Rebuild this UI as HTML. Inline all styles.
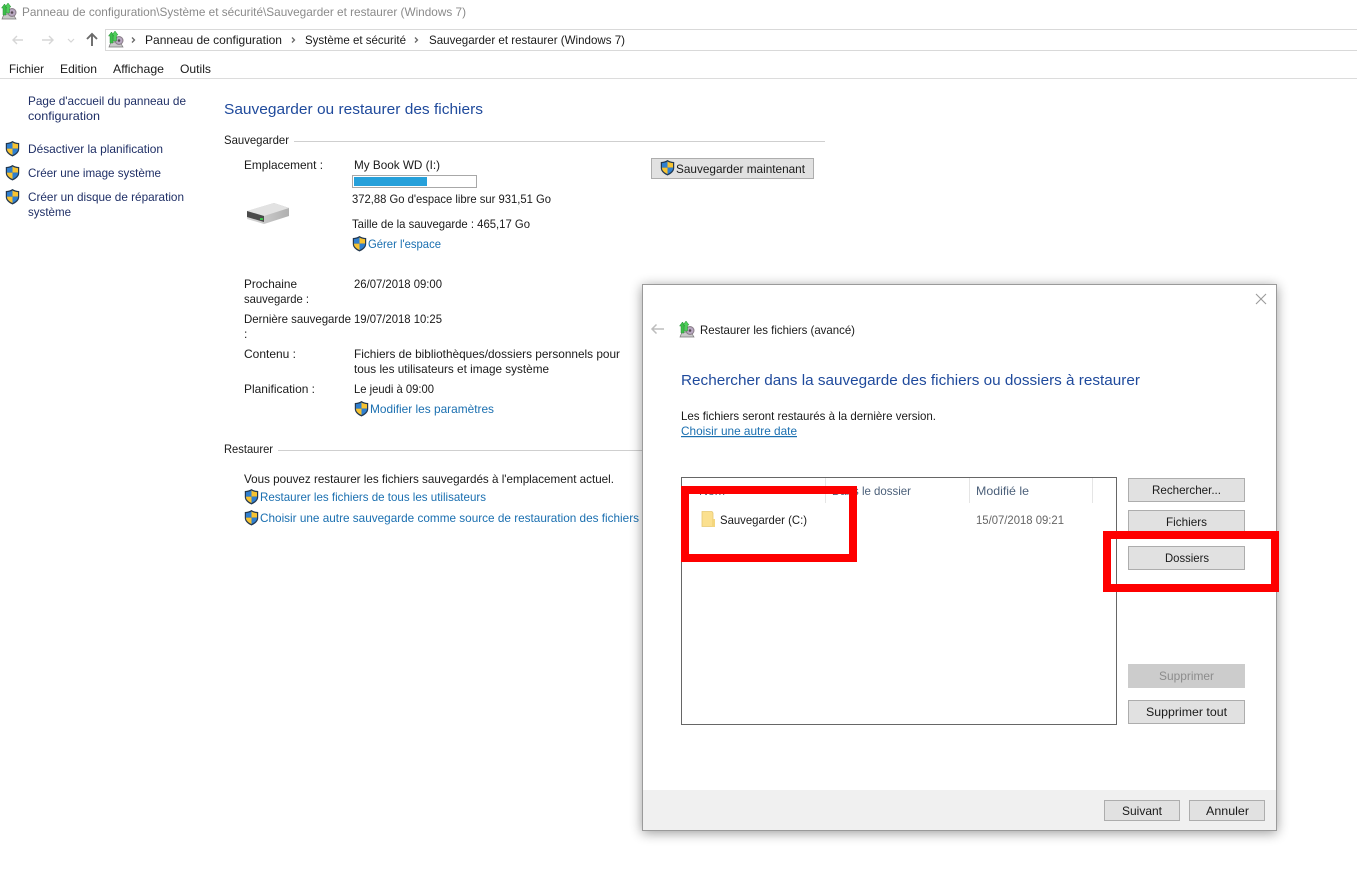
<!DOCTYPE html>
<html lang="fr">
<head>
<meta charset="utf-8">
<title>Sauvegarder et restaurer</title>
<style>
html,body{margin:0;padding:0;background:#fff;width:1357px;height:873px;overflow:hidden}
svg{display:block;position:absolute;left:0;top:0}
text{font-family:"Liberation Sans",sans-serif;font-size:12px;fill:#1a1a1a}
.nav{fill:#1f2f66}
.lnk{fill:#1a6fb0}
.gry{fill:#8a8a8a}
.hd{fill:#4c607a}
.h1{font-size:15px;fill:#1f4a9c}
.btn{fill:#e1e1e1;stroke:#adadad;stroke-width:1}
</style>
</head>
<body>
<svg width="1357" height="873" viewBox="0 0 1357 873" xmlns="http://www.w3.org/2000/svg">
<defs>
  <filter id="sh" x="-8%" y="-8%" width="116%" height="116%">
    <feGaussianBlur stdDeviation="6"/>
  </filter>
  <linearGradient id="dr" x1="0" y1="0" x2="1" y2="0">
    <stop offset="0" stop-color="#d8d8d8"/>
    <stop offset="1" stop-color="#b0b0b0"/>
  </linearGradient>
  <g id="shield">
    <path d="M7.500 0 C5.500 1.400 3 2 .8 2 L.8 8 C.8 11.500 4 14 7.500 15.500 C11 14 14.200 11.500 14.200 8 L14.200 2 C12 2 9.500 1.400 7.500 0Z" fill="#23384f"/>
    <path d="M7.500 1.500 C5.800 2.600 3.800 3 2 3.100 L2 7.600 L7.500 7.600Z" fill="#2f7fd0"/>
    <path d="M7.500 1.500 C9.200 2.600 11.200 3 13 3.100 L13 7.600 L7.500 7.600Z" fill="#f7c331"/>
    <path d="M2 7.600 L7.500 7.600 L7.500 14 C4.500 12.700 2 10.800 2 8Z" fill="#f7c331"/>
    <path d="M13 7.600 L7.500 7.600 L7.500 14 C10.500 12.700 13 10.800 13 8Z" fill="#2f7fd0"/>
  </g>
  <g id="app">
    <path d="M1 16 L3 11 L12 11 L15 16 Z" fill="#c9c9c9" stroke="#777" stroke-width=".7"/>
    <circle cx="11" cy="9.500" r="4.500" fill="#8b7f8a"/>
    <circle cx="11" cy="9.500" r="3.400" fill="#b9a9c2"/>
    <circle cx="11" cy="9.500" r="1.300" fill="#5a4a55"/>
    <path d="M3.500 1 L6.500 5 L5 5 L5 12 L2 12 L2 5 L.5 5Z" fill="#3cc04a" stroke="#2a8c37" stroke-width=".5"/>
    <path d="M7 0 L10 4 L8.500 4 L8.500 10 L5.500 10 L5.500 4 L4 4Z" fill="#4fd05a" stroke="#2a8c37" stroke-width=".5"/>
  </g>
</defs>

<!-- Title bar -->
<use href="#app" x="1" y="3"/>
<text x="22" y="16" textLength="444" lengthAdjust="spacingAndGlyphs" class="gry">Panneau de configuration\Système et sécurité\Sauvegarder et restaurer (Windows 7)</text>

<!-- Nav arrows -->
<path d="M23 40 H13 M17 36 L13 40 L17 44" fill="none" stroke="#d6d6d6" stroke-width="1.400"/>
<path d="M42 40 H53 M49 36 L53 40 L49 44" fill="none" stroke="#d6d6d6" stroke-width="1.400"/>
<path d="M68 39 L71 42 L74 39" fill="none" stroke="#d6d6d6" stroke-width="1.200"/>
<path d="M92 46 V34 M87 39 L92 34 L97 39" fill="none" stroke="#6a6a6a" stroke-width="1.900"/>

<!-- Address bar -->
<rect x="105.500" y="29.500" width="1260" height="21" fill="#fff" stroke="#d9d9d9"/>
<use href="#app" x="108" y="31"/>
<path d="M132 37.500 L134.500 40 L132 42.500" fill="none" stroke="#666" stroke-width="1.300"/>
<text x="145" y="44" textLength="137" lengthAdjust="spacingAndGlyphs">Panneau de configuration</text>
<path d="M292 37.500 L294.500 40 L292 42.500" fill="none" stroke="#666" stroke-width="1.300"/>
<text x="305" y="44" textLength="101" lengthAdjust="spacingAndGlyphs">Système et sécurité</text>
<path d="M415 37.500 L417.500 40 L415 42.500" fill="none" stroke="#666" stroke-width="1.300"/>
<text x="429" y="44" textLength="196" lengthAdjust="spacingAndGlyphs">Sauvegarder et restaurer (Windows 7)</text>

<!-- Menu -->
<text x="9" y="73" textLength="35" lengthAdjust="spacingAndGlyphs">Fichier</text>
<text x="60" y="73" textLength="37" lengthAdjust="spacingAndGlyphs">Edition</text>
<text x="113" y="73" textLength="51" lengthAdjust="spacingAndGlyphs">Affichage</text>
<text x="180" y="73" textLength="31" lengthAdjust="spacingAndGlyphs">Outils</text>
<rect x="0" y="78" width="1357" height="1" fill="#dcdcdc"/>

<!-- Left nav -->
<text x="28" y="105" textLength="158" lengthAdjust="spacingAndGlyphs" class="nav">Page d'accueil du panneau de</text>
<text x="28" y="120" textLength="72" lengthAdjust="spacingAndGlyphs" class="nav">configuration</text>
<use href="#shield" x="5" y="141"/>
<text x="28" y="153" textLength="135" lengthAdjust="spacingAndGlyphs" class="nav">Désactiver la planification</text>
<use href="#shield" x="5" y="165"/>
<text x="28" y="177" textLength="133" lengthAdjust="spacingAndGlyphs" class="nav">Créer une image système</text>
<use href="#shield" x="5" y="189"/>
<text x="28" y="201" textLength="156" lengthAdjust="spacingAndGlyphs" class="nav">Créer un disque de réparation</text>
<text x="28" y="216" textLength="43" lengthAdjust="spacingAndGlyphs" class="nav">système</text>

<!-- Main -->
<text x="224" y="114" textLength="259" lengthAdjust="spacingAndGlyphs" class="h1">Sauvegarder ou restaurer des fichiers</text>
<text x="224" y="144" textLength="65" lengthAdjust="spacingAndGlyphs">Sauvegarder</text>
<rect x="294" y="141" width="531" height="1" fill="#cfcfcf"/>

<text x="244" y="169" textLength="79" lengthAdjust="spacingAndGlyphs">Emplacement :</text>
<text x="354" y="169" textLength="86" lengthAdjust="spacingAndGlyphs">My Book WD (I:)</text>
<rect x="352.500" y="175.500" width="124" height="12" fill="#fff" stroke="#a8a8a8"/>
<rect x="354" y="177" width="73" height="9" fill="#26a0da"/>
<text x="352" y="203" textLength="199" lengthAdjust="spacingAndGlyphs">372,88 Go d'espace libre sur 931,51 Go</text>
<text x="352" y="228" textLength="178" lengthAdjust="spacingAndGlyphs">Taille de la sauvegarde : 465,17 Go</text>
<use href="#shield" x="352" y="236"/>
<text x="368" y="248" textLength="73" lengthAdjust="spacingAndGlyphs" class="lnk">Gérer l'espace</text>

<!-- Drive icon -->
<path d="M247 211 L274 203 L289 208 L289 216 L264 224 L247 219Z" fill="url(#dr)"/>
<path d="M247 211 L274 203 L289 208 L264 216Z" fill="#e2e2e2"/>
<path d="M247 211 L264 216 L264 222 L247 217Z" fill="#4a4a4a"/>
<rect x="260" y="218" width="3" height="2" fill="#3fc24f"/>

<!-- Save button -->
<rect x="651.500" y="158.500" width="162" height="20" class="btn"/>
<use href="#shield" x="660" y="160"/>
<text x="676" y="173" textLength="129" lengthAdjust="spacingAndGlyphs">Sauvegarder maintenant</text>

<text x="244" y="288" textLength="53" lengthAdjust="spacingAndGlyphs">Prochaine</text>
<text x="244" y="303" textLength="65" lengthAdjust="spacingAndGlyphs">sauvegarde :</text>
<text x="354" y="288" textLength="88" lengthAdjust="spacingAndGlyphs">26/07/2018 09:00</text>
<text x="244" y="323" textLength="107" lengthAdjust="spacingAndGlyphs">Dernière sauvegarde</text>
<text x="244" y="338">:</text>
<text x="354" y="323" textLength="88" lengthAdjust="spacingAndGlyphs">19/07/2018 10:25</text>
<text x="244" y="358" textLength="52" lengthAdjust="spacingAndGlyphs">Contenu :</text>
<text x="354" y="358" textLength="266" lengthAdjust="spacingAndGlyphs">Fichiers de bibliothèques/dossiers personnels pour</text>
<text x="354" y="373" textLength="195" lengthAdjust="spacingAndGlyphs">tous les utilisateurs et image système</text>
<text x="244" y="393" textLength="71" lengthAdjust="spacingAndGlyphs">Planification :</text>
<text x="354" y="393" textLength="80" lengthAdjust="spacingAndGlyphs">Le jeudi à 09:00</text>
<use href="#shield" x="354" y="401"/>
<text x="370" y="413" textLength="124" lengthAdjust="spacingAndGlyphs" class="lnk">Modifier les paramètres</text>

<text x="224" y="453" textLength="49" lengthAdjust="spacingAndGlyphs">Restaurer</text>
<rect x="278" y="450" width="364" height="1" fill="#cfcfcf"/>
<text x="244" y="483" textLength="370" lengthAdjust="spacingAndGlyphs">Vous pouvez restaurer les fichiers sauvegardés à l'emplacement actuel.</text>
<use href="#shield" x="244" y="489"/>
<text x="260" y="501" textLength="226" lengthAdjust="spacingAndGlyphs" class="lnk">Restaurer les fichiers de tous les utilisateurs</text>
<use href="#shield" x="244" y="510"/>
<text x="260" y="522" textLength="379" lengthAdjust="spacingAndGlyphs" class="lnk">Choisir une autre sauvegarde comme source de restauration des fichiers</text>

<!-- Dialog -->
<rect x="642" y="286" width="635" height="547" fill="#000" opacity=".4" filter="url(#sh)"/>
<rect x="642.500" y="284.500" width="634" height="546" fill="#fff" stroke="#9a9a9a"/>
<rect x="643" y="790" width="633" height="40" fill="#f0f0f0"/>
<path d="M1256 294 L1266 304 M1266 294 L1256 304" stroke="#9a9a9a" stroke-width="1.100" fill="none"/>
<path d="M664 329 H652 M656.500 324.500 L652 329 L656.500 333.500" fill="none" stroke="#bdbdbd" stroke-width="1.500"/>
<use href="#app" x="679" y="321"/>
<text x="700" y="334" textLength="155" lengthAdjust="spacingAndGlyphs">Restaurer les fichiers (avancé)</text>
<text x="681" y="385" textLength="459" lengthAdjust="spacingAndGlyphs" class="h1">Rechercher dans la sauvegarde des fichiers ou dossiers à restaurer</text>
<text x="681" y="420" textLength="255" lengthAdjust="spacingAndGlyphs">Les fichiers seront restaurés à la dernière version.</text>
<text x="681" y="435" textLength="116" lengthAdjust="spacingAndGlyphs" class="lnk" text-decoration="underline">Choisir une autre date</text>

<!-- List -->
<rect x="681.500" y="477.500" width="435" height="247" fill="#fff" stroke="#666"/>
<rect x="825" y="478" width="1" height="25" fill="#e5e5e5"/>
<rect x="969" y="478" width="1" height="25" fill="#e5e5e5"/>
<rect x="1092" y="478" width="1" height="25" fill="#e5e5e5"/>
<text x="699" y="495" textLength="26" lengthAdjust="spacingAndGlyphs" class="hd">Nom</text>
<text x="832" y="495" textLength="79" lengthAdjust="spacingAndGlyphs" class="hd">Dans le dossier</text>
<text x="976" y="495" textLength="53" lengthAdjust="spacingAndGlyphs" class="hd">Modifié le</text>
<path d="M702 511.500 H712 L713 513 V526.500 H702Z" fill="#fbe08f" stroke="#e6c873" stroke-width=".8"/>
<rect x="712" y="519" width="3" height="8" fill="#f4d67e"/>
<text x="720" y="524" textLength="87" lengthAdjust="spacingAndGlyphs">Sauvegarder (C:)</text>
<text x="976" y="524" textLength="88" lengthAdjust="spacingAndGlyphs" style="fill:#666">15/07/2018 09:21</text>

<!-- Dialog buttons -->
<rect x="1128.500" y="478.500" width="116" height="23" class="btn"/>
<text x="1152" y="494" textLength="69" lengthAdjust="spacingAndGlyphs">Rechercher...</text>
<rect x="1128.500" y="510.500" width="116" height="23" class="btn"/>
<text x="1166" y="526" textLength="41" lengthAdjust="spacingAndGlyphs">Fichiers</text>
<rect x="1128.500" y="546.500" width="116" height="23" class="btn"/>
<text x="1165" y="562" textLength="44" lengthAdjust="spacingAndGlyphs">Dossiers</text>
<rect x="1128" y="664" width="117" height="24" fill="#cccccc"/>
<text x="1159" y="680" textLength="55" lengthAdjust="spacingAndGlyphs" style="fill:#8c8c8c">Supprimer</text>
<rect x="1128.500" y="700.500" width="116" height="23" class="btn"/>
<text x="1146" y="716" textLength="81" lengthAdjust="spacingAndGlyphs">Supprimer tout</text>
<rect x="1104.500" y="800.500" width="75" height="20" class="btn"/>
<text x="1122" y="815" textLength="40" lengthAdjust="spacingAndGlyphs">Suivant</text>
<rect x="1189.500" y="800.500" width="75" height="20" class="btn"/>
<text x="1206" y="815" textLength="43" lengthAdjust="spacingAndGlyphs">Annuler</text>

<!-- Red annotations -->
<rect x="685" y="490" width="168" height="68" fill="none" stroke="#fe0000" stroke-width="8"/>
<rect x="1107" y="535" width="168" height="53" fill="none" stroke="#fe0000" stroke-width="8"/>
</svg>
</body>
</html>
